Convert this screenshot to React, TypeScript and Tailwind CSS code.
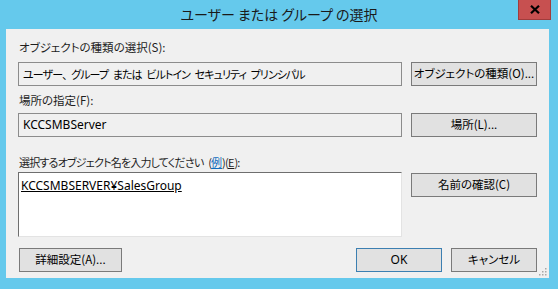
import React from 'react';

const font = "font-['Meiryo_UI','Noto_Sans_CJK_JP',sans-serif] [font-feature-settings:'palt']";
const latin = "font-['Noto_Sans','Noto_Sans_CJK_JP',sans-serif] text-[12px]";

const Button: React.FC<{ label: string; className?: string; primary?: boolean; latinText?: boolean }> = ({ label, className = '', primary, latinText }) => (
    <button
        type="button"
        className={`h-[24px] flex items-center justify-center whitespace-nowrap bg-[#e1e1e1] border leading-none text-black ${latinText ? latin : 'text-[11.5px]'} ${primary ? 'border-[#3c7fb1]' : 'border-[#7a7a7a]'} ${className}`}
    >
        {label}
    </button>
);

const Label: React.FC<{ children: React.ReactNode; className?: string }> = ({ children, className = 'text-[11.5px]' }) => (
    <div className={`h-[16px] leading-[16px] text-[#1e1e1e] pl-[1px] whitespace-nowrap ${className}`}>{children}</div>
);

const ReadBox: React.FC<{ value: string; latinText?: boolean }> = ({ value, latinText }) => (
    <div className={`w-[384px] h-[24px] border border-[#8c8c8c] bg-[#f0f0f0] flex items-center pl-[4px] text-black whitespace-nowrap ${latinText ? latin : 'text-[11px] tracking-[-0.9px] [word-spacing:3px]'}`}>
        {value}
    </div>
);

export default function App() {
    return (
        <div className={`w-[558px] h-[289px] bg-[#65c9ec] flex flex-col ${font}`}>
            {/* title bar */}
            <div className="h-[29px] grid grid-cols-[1fr_auto_1fr] items-start">
                <div />
                <div className="pt-[5px] text-[14px] leading-[18px] text-[#1a1a1a]">ユーザー または グループ の選択</div>
                <div className="flex justify-end pr-[7px]">
                    <div className="w-[33px] h-[20px] bg-[#c75050] border border-t-0 border-[#a03c3c] flex items-center justify-center">
                        <svg width="10" height="9" viewBox="0 0 10 9">
                            <path d="M1 0.8 L9 8.2 M9 0.8 L1 8.2" stroke="#000" strokeWidth="2.2" />
                        </svg>
                    </div>
                </div>
            </div>

            {/* dialog body */}
            <div className="mx-[6px] w-[543px] h-[249px] bg-[#f0f0f0] px-[12px] pt-[10px] relative">
                <Label className="text-[11.5px] mb-[7px]">オブジェクトの種類の選択(S):</Label>
                <div className="flex gap-[9px]">
                    <ReadBox value="ユーザー、 グループ または ビルトイン セキュリティ プリンシパル" />
                    <Button label="オブジェクトの種類(O)..." className="w-[126px]" />
                </div>

                <Label className="text-[11.5px] mt-[6px] mb-[5px]">場所の指定(F):</Label>
                <div className="flex gap-[9px]">
                    <ReadBox value="KCCSMBServer" latinText />
                    <Button label="場所(L)..." className="w-[126px]" />
                </div>

                <Label className="text-[11px] mt-[17px] mb-[2px] tracking-[-0.8px] [word-spacing:3px]">
                    選択するオブジェクト名を入力してください (<span className="text-[#0f6cbd] underline tracking-normal">例</span>)(<span className="underline tracking-normal">E</span>):
                </Label>
                <div className="flex gap-[9px] items-start">
                    <div className={`w-[384px] h-[65px] bg-white border border-t-[#6e6e6e] border-l-[#6e6e6e] border-r-[#e3e3e3] border-b-[#e3e3e3] pl-[2px] pt-[5px] leading-[16px] text-black ${latin}`}>
                        <span className="underline">KCCSMBSERVER¥SalesGroup</span>
                    </div>
                    <Button label="名前の確認(C)" className="w-[126px] mt-[1px]" />
                </div>

                <div className="mt-[11px] flex items-center">
                    <Button label="詳細設定(A)..." className="w-[103px] ml-[1px]" />
                    <div className="flex-1" />
                    <Button label="OK" primary latinText className="w-[86px]" />
                    <Button label="キャンセル" className="w-[86px] ml-[9px]" />
                </div>

                {/* resize grip */}
                <svg className="absolute right-[2px] bottom-[2px]" width="8" height="8" viewBox="0 0 8 8">
                    <rect x="6" y="0" width="1.5" height="1.5" fill="#a8a8a8" />
                    <rect x="3" y="3" width="1.5" height="1.5" fill="#a8a8a8" />
                    <rect x="6" y="3" width="1.5" height="1.5" fill="#a8a8a8" />
                    <rect x="0" y="6" width="1.5" height="1.5" fill="#a8a8a8" />
                    <rect x="3" y="6" width="1.5" height="1.5" fill="#a8a8a8" />
                    <rect x="6" y="6" width="1.5" height="1.5" fill="#a8a8a8" />
                </svg>
            </div>
        </div>
    );
}
